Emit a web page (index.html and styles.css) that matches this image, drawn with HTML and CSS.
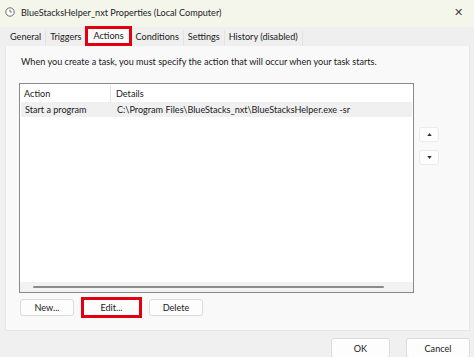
FILE: index.html
```html
<!DOCTYPE html>
<html>
<head>
<meta charset="utf-8">
<link rel="stylesheet" href="styles.css">
</head>
<body>
<div class="window">
  <div class="titlebar">
    <svg class="clock" width="10" height="10" viewBox="0 0 10 10"><circle cx="5" cy="5" r="4.2" fill="#fff" stroke="#6b6b6b" stroke-width="1"/><path d="M5 2.5V5h2" fill="none" stroke="#6b6b6b" stroke-width="0.9"/></svg>
    <span class="title">BlueStacksHelper_nxt Properties (Local Computer)</span>
    <span class="close">✕</span>
  </div>
  <div class="tabs">
    <span class="tab">General</span>
    <span class="tab">Triggers</span>
    <span class="tab active">Actions</span>
    <span class="tab">Conditions</span>
    <span class="tab">Settings</span>
    <span class="tab">History (disabled)</span>
  </div>
  <div class="panel">
    <p class="intro">When you create a task, you must specify the action that will occur when your task starts.</p>
    <div class="listrow">
      <div class="list">
        <div class="head">
          <span class="c1">Action</span><span class="c2">Details</span>
        </div>
        <div class="row">
          <span class="c1">Start a program</span><span class="c2">C:\Program Files\BlueStacks_nxt\BlueStacksHelper.exe -sr</span>
        </div>
        <div class="spacer"></div>
        <div class="hscroll"><div class="thumb"></div></div>
      </div>
      <div class="arrows">
        <button class="arrow"><svg width="5" height="3" viewBox="0 0 6 4"><path d="M0 4L3 0L6 4Z" fill="#333"/></svg></button>
        <button class="arrow"><svg width="5" height="3" viewBox="0 0 6 4"><path d="M0 0L3 4L6 0Z" fill="#333"/></svg></button>
      </div>
    </div>
    <div class="actions">
      <button class="btn">New...</button>
      <button class="btn hl">Edit...</button>
      <button class="btn">Delete</button>
    </div>
  </div>
  <div class="footer">
    <button class="btn ok">OK</button>
    <button class="btn cancel">Cancel</button>
  </div>
</div>
</body>
</html>
```
FILE: styles.css
```css
* { box-sizing: border-box; }
html, body { margin: 0; padding: 0; }
body {
  width: 474px; height: 357px; overflow: hidden;
  font-family: Lato, "Open Sans", sans-serif;
  font-size: 9.1px; color: #1a1a1a;
  background: #f0f0f0;
}
.window { display: flex; flex-direction: column; height: 357px; }
.titlebar {
  height: 27px; display: flex; align-items: center;
  background: #f4f6ec; padding: 0 0 0 5px;
}
.clock { margin-right: 6px; margin-top: -3px; }
.title { flex: 1; font-size: 9.1px; margin-top: -3px; color: #222; }
.close { width: 20px; font-size: 11px; color: #444; margin-top: -3px; }
.tabs {
  height: 19px; display: flex; align-items: flex-end;
  padding-left: 6px; background: #efefef;
}
.tab {
  padding: 0 4px 3px 4px; line-height: 13px;
  border-right: 1px solid #e2e2e2;
}
.tab.active {
  background: #fafafa; outline: 3px solid #e00010; outline-offset: -1px;
  padding: 1px 6px 2px 6px; margin: 0 2px 1px 1px; position: relative; top: -1px;
  border-right: none;
}
.panel {
  margin: 0 4px 0 5px; background: #f9f9f9; height: 285px;
  border: 1px solid #e6e6e6; border-top: none;
  padding: 6px 0 0 13px;
}
.intro { margin: 4px 0 0 2px; }
.listrow { display: flex; margin-top: 16px; }
.list {
  width: 395px; height: 210px; background: #fff;
  border: 1px solid #8a8a8a; display: flex; flex-direction: column;
}
.head, .row { display: flex; height: 15px; align-items: center; }
.head { height: 18px; padding-top: 1px; }
.head .c1 { border-right: 1px solid #e5e5e5; }
.row { background: #f0f0f0; margin: 0 1px; height: 15px; }
.c1 { width: 91px; padding-left: 4px; height: 100%; display: flex; align-items: center; }
.c2 { padding-left: 5px; }
.spacer { flex: 1; }
.hscroll { height: 10px; background: #f2f2f2; display: flex; align-items: center; padding-left: 13px; }
.thumb { width: 351px; height: 2px; background: #8c8c8c; border-radius: 1px; }
.arrows { display: flex; flex-direction: column; gap: 8px; margin: 44px 0 0 5px; }
.arrow {
  width: 20px; height: 15px; padding: 0; display: flex; align-items: center; justify-content: center;
  background: #fdfdfd; border: 1px solid #ebebeb; border-radius: 3px;
}
.actions { display: flex; gap: 7px; margin-top: 6px; padding-left: 1px; }
.btn {
  font-family: inherit; font-size: 9.1px; color: #1a1a1a;
  width: 54px; height: 17px; padding: 0;
  background: #fdfdfd; border: 1px solid #dcdcdc; border-radius: 3px;
}
.btn.hl { border: 3px solid #e00010; border-radius: 0; width: 61px; height: 21px; margin-top: -2px; }
.footer {
  flex: 1; display: flex; justify-content: flex-end; align-items: flex-end;
  gap: 16px; padding: 0 4px 0 0; background: #f0f0f0;
}
.btn.ok { width: 59px; height: 20px; margin-bottom: -1px; }
.btn.cancel { width: 64px; height: 20px; margin-bottom: -1px; }
```
